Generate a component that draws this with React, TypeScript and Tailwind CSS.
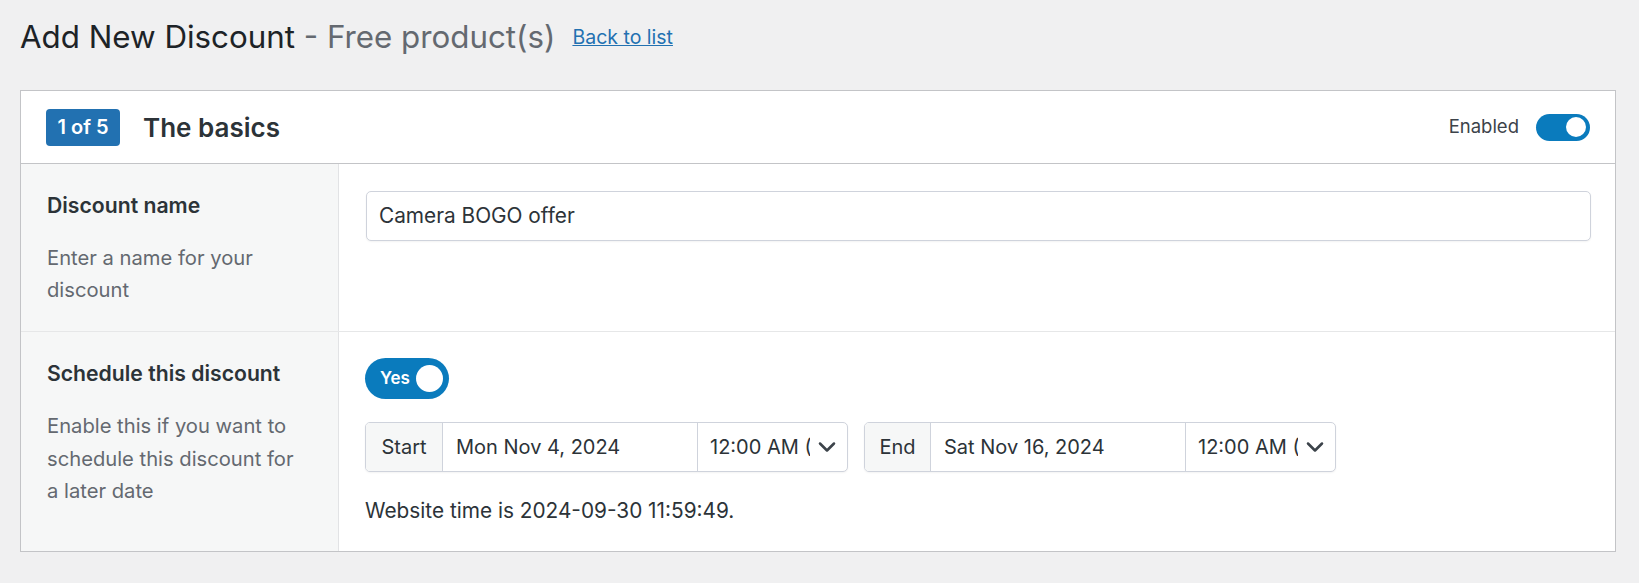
import { ChevronDown } from 'lucide-react'

/**
 * Petit interrupteur (toggle) façon WordPress
 */
function Toggle({ label, size = 'sm' }: { label?: string; size?: 'sm' | 'lg' }) {
  if (size === 'lg') {
    return (
      <div className="flex h-[41px] w-[84px] items-center justify-between rounded-full bg-[#0a7bbd] pl-[15px] pr-[6px]">
        <span className="text-[17px] font-semibold text-white">{label}</span>
        <span className="h-[27px] w-[27px] rounded-full bg-white" />
      </div>
    )
  }
  return (
    <div className="flex h-[27px] w-[54px] items-center justify-end rounded-full bg-[#0a7bbd] pr-[4px]">
      <span className="h-[20px] w-[20px] rounded-full bg-white" />
    </div>
  )
}

/**
 * Groupe date + heure avec préfixe
 */
function DateGroup({ prefix, date, prefixWidth }: { prefix: string; date: string; prefixWidth: string }) {
  return (
    <div className="flex h-[50px] items-stretch overflow-hidden rounded-[5px] border border-[#cfd3dc] bg-white text-[20px] text-[#2c3338] shadow-[0_1px_2px_rgba(0,0,0,0.05)]">
      <div className={`flex items-center justify-center border-r border-[#cfd3dc] bg-[#f6f7f7] ${prefixWidth}`}>
        {prefix}
      </div>
      <div className="flex w-[255px] items-center border-r border-[#cfd3dc] pl-[13px]">{date}</div>
      <div className="relative flex w-[149px] items-center pl-[12px]">
        <span className="w-[100px] overflow-hidden whitespace-nowrap">12:00 AM (UTC)</span>
        <ChevronDown className="absolute right-[6px] h-[28px] w-[28px] text-[#3c434a]" strokeWidth={2.2} />
      </div>
    </div>
  )
}

export default function App() {
  return (
    <div className="min-h-[583px] bg-[#f0f0f1] pl-5 pr-[23px] pt-[17px] font-['Inter',sans-serif] text-[#1d2327]">
      {/* En-tête de page */}
      <div className="flex h-[40px] items-center">
        <h1 className="text-[31.3px] leading-[40px] font-normal">
          Add New Discount <span className="text-[#646970]">- Free product(s)</span>
        </h1>
        <a href="#" className="ml-[17px] mt-[1px] text-[19.5px] text-[#2271b1] underline">
          Back to list
        </a>
      </div>

      {/* Carte */}
      <div className="mt-[33px] border border-[#c3c4c7] bg-white">
        <div className="flex h-[73px] items-center justify-between border-b border-[#c3c4c7] pl-[25px] pr-[25px]">
          <div className="flex items-center">
            <span className="flex h-[37px] w-[74px] items-center justify-center rounded-[4px] bg-[#2271b1] text-[20px] font-semibold text-white">
              1 of 5
            </span>
            <span className="ml-[23px] text-[26px] font-semibold text-[#2c3338]">The basics</span>
          </div>
          <div className="flex items-center">
            <span className="mr-[17px] text-[18.5px] text-[#3c434a]">Enabled</span>
            <Toggle />
          </div>
        </div>

        {/* Ligne : nom */}
        <div className="flex border-b border-[#e6e7e8]">
          <div className="w-[318px] shrink-0 border-r border-[#e2e3e5] bg-[#f6f7f7] pb-[25px] pl-[26px] pr-[36px] pt-[25px]">
            <div className="text-[21.2px] leading-[32px] font-semibold text-[#2c3338]">Discount name</div>
            <p className="mt-[21px] text-[20.2px] leading-[32px] text-[#646970]">Enter a name for your discount</p>
          </div>
          <div className="flex-1 pl-[27px] pr-[24px] pt-[27px]">
            <div className="flex h-[50px] items-center rounded-[5px] border border-[#cfd3dc] bg-white pl-[12px] text-[20.8px] text-[#2c3338] shadow-[0_1px_2px_rgba(0,0,0,0.05)]">
              Camera BOGO offer
            </div>
          </div>
        </div>

        {/* Ligne : planification */}
        <div className="flex">
          <div className="w-[318px] shrink-0 border-r border-[#e2e3e5] bg-[#f6f7f7] pb-[25px] pl-[26px] pr-[36px] pt-[25px]">
            <div className="text-[21.2px] leading-[32px] font-semibold text-[#2c3338]">Schedule this discount</div>
            <p className="mt-[21px] text-[20.2px] leading-[32.5px] text-[#646970]">
              Enable this if you want to schedule this discount for a later date
            </p>
          </div>
          <div className="flex-1 pb-[24px] pl-[26px] pt-[26px]">
            <Toggle size="lg" label="Yes" />
            <div className="mt-[23px] flex gap-[16px]">
              <DateGroup prefix="Start" date="Mon Nov 4, 2024" prefixWidth="w-[77px]" />
              <DateGroup prefix="End" date="Sat Nov 16, 2024" prefixWidth="w-[66px]" />
            </div>
            <p className="mt-[23px] text-[20.8px] leading-[32px] text-[#2c3338]">Website time is 2024-09-30 11:59:49.</p>
          </div>
        </div>
      </div>
    </div>
  )
}
